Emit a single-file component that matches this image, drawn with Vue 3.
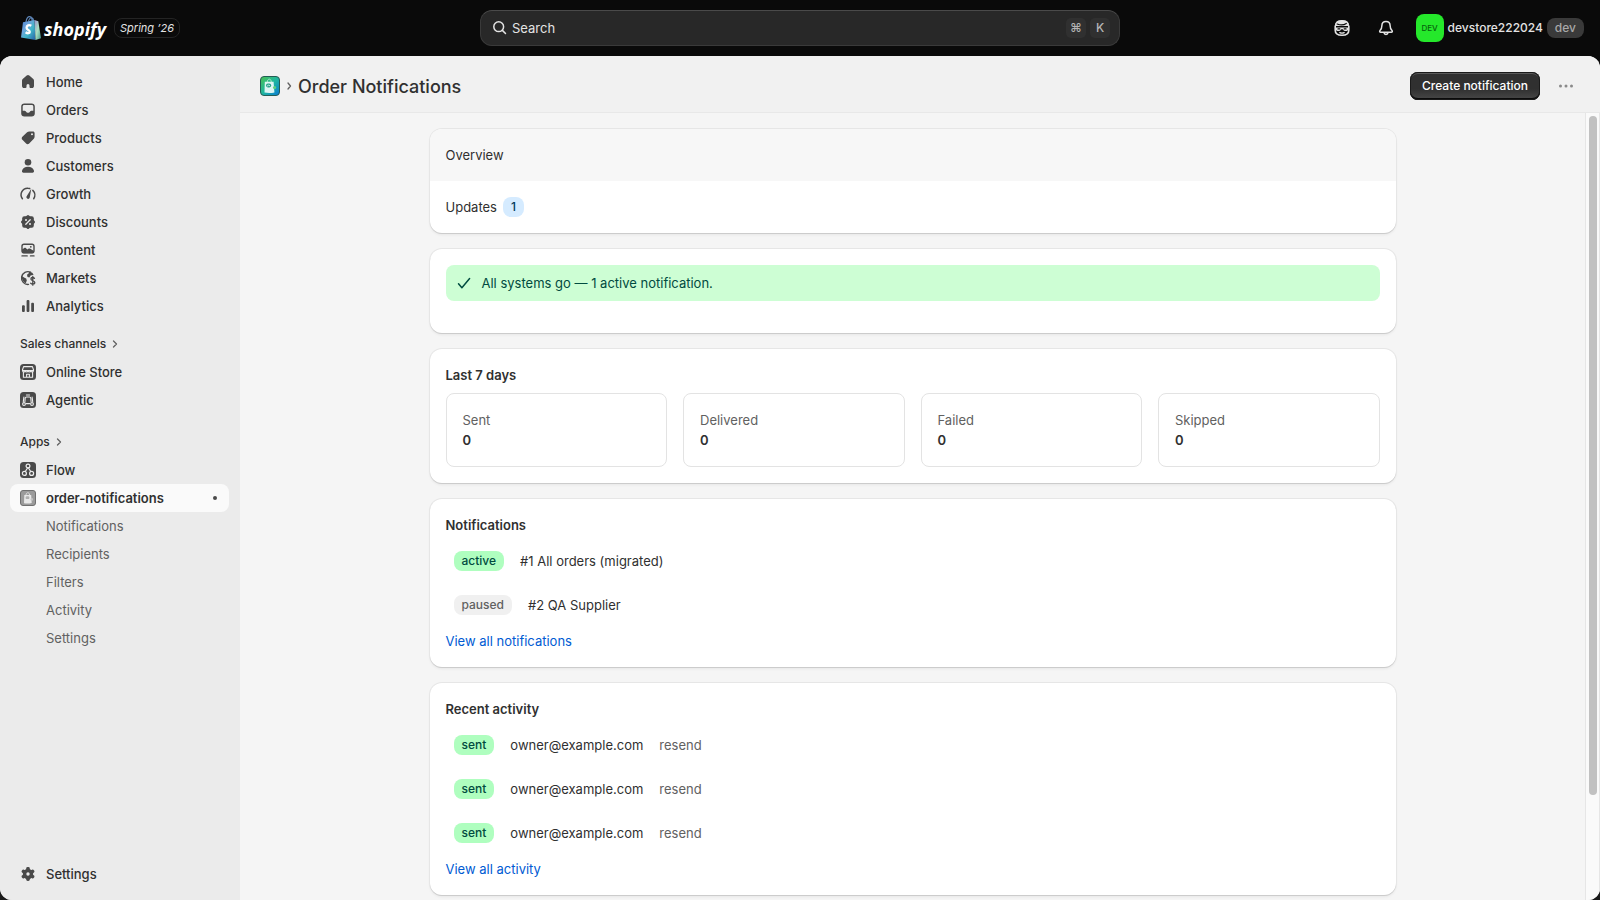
<script setup>
const icons = {
  home: '<path d="M8.7 3.6a2 2 0 0 1 2.6 0l4 3.5c.5.4.7 1 .7 1.6v5.2c0 1.2-.9 2.1-2 2.1h-1.600c-.5 0-.9-.4-.9-.9v-1.700a1.500 1.500 0 0 0-3 0v1.700c0 .5-.4.9-.9.9H6c-1.100 0-2-.9-2-2.100V8.700c0-.6.2-1.200.7-1.600z" fill="currentColor"/>',
  orders: '<path fill-rule="evenodd" d="M6.300 3.500h7.400c1.800 0 3.100 1.200 3.100 3v7c0 1.800-1.300 3-3.100 3H6.300c-1.800 0-3.100-1.200-3.100-3v-7c0-1.800 1.300-3 3.100-3zM6.300 5c-1 0-1.600.6-1.600 1.500v4.300h2c.6 0 .9.2 1.200.7l.4.600c.3.500.7.700 1.200.7h1c.5 0 .9-.2 1.200-.7l.4-.6c.3-.5.6-.7 1.200-.7h2V6.500c0-.9-.6-1.500-1.600-1.500z" fill="currentColor"/>',
  products: '<path fill-rule="evenodd" d="M11.300 3.500h3.600c1 0 1.700.7 1.700 1.700v3.600c0 .8-.3 1.500-.8 2l-4.600 4.700c-.9.900-2.300.9-3.100 0l-3.700-3.700c-.9-.8-.9-2.200 0-3.100l4.700-4.500c.6-.5 1.400-.7 2.200-.7zM14 7.200a1 1 0 1 0 0-2 1 1 0 0 0 0 2z" fill="currentColor"/>',
  customers: '<circle cx="10" cy="6.200" r="3.300" fill="currentColor"/><path d="M10 10.800c3 0 5.300 1.600 6 4 .3 1-.4 1.900-1.400 1.900H5.400c-1 0-1.700-.9-1.400-1.900.7-2.400 3-4 6-4z" fill="currentColor"/>',
  growth: '<path d="M4.400 14.700A6.500 6.500 0 0 1 10 4.300q1 0 1.700.2M14.800 6.400a6.400 6.400 0 0 1 .9 8.300" fill="none" stroke="currentColor" stroke-width="1.500" stroke-linecap="round"/><path d="M13.300 4.800 11.700 13.800a1.700 1.700 0 1 1-3.200-1.200z" fill="currentColor"/>',
  discounts: '<rect x="4.200" y="4.200" width="11.600" height="11.600" rx="2" fill="currentColor"/><rect x="4.600" y="4.600" width="10.800" height="10.800" rx="1.500" transform="rotate(45 10 10)" fill="currentColor"/><path d="M12.200 7.800l-4.400 4.400" stroke="#ebebeb" stroke-width="1.300" stroke-linecap="round"/><circle cx="8" cy="8" r="1" fill="#ebebeb"/><circle cx="12" cy="12" r="1" fill="#ebebeb"/>',
  content: '<rect x="4" y="4.200" width="12" height="8.600" rx="2" fill="none" stroke="currentColor" stroke-width="1.400"/><path d="M4 9.500 6.300 8c.6-.4 1.200-.3 1.700.2l1.400 1.400 1-.8c.6-.5 1.300-.5 1.900 0L16 11v1c0 .8-.6 1.300-1.400 1.300H5.400C4.600 13.300 4 12.800 4 12z" fill="currentColor"/><circle cx="12.800" cy="6.800" r=".9" fill="currentColor"/><path d="M4 15.900h5.200M12.500 15.900H16" stroke="currentColor" stroke-width="1.400" stroke-linecap="round"/>',
  markets: '<path d="M12.600 4.200A6.400 6.400 0 1 0 10.500 16.400" fill="none" stroke="currentColor" stroke-width="1.400" stroke-linecap="round"/><path d="M3.800 8 6.500 9.800l1.700.7.600 2-1 2.800c-2.500-1-4.300-3.700-4-7.300zM9.500 9 9 6.800l1.800-1.500.3-1.600 3.200 1.100 1.300 2-3 .7-1.200 2z" fill="currentColor"/><path d="M16.500 10.300c-.5-.6-1.200-.8-1.800-.8-1.100 0-1.800.6-1.800 1.500 0 2.200 3.900 1.300 3.900 3.600 0 1-.8 1.600-2 1.600-.9 0-1.700-.4-2.200-1M14.800 8.500v8.700" fill="none" stroke="currentColor" stroke-width="1.300" stroke-linecap="round"/>',
  analytics: '<rect x="4" y="9.300" width="2.800" height="6.700" rx="1" fill="currentColor"/><rect x="8.600" y="4" width="2.800" height="12" rx="1" fill="currentColor"/><rect x="13.200" y="6.700" width="2.800" height="9.300" rx="1" fill="currentColor"/>',
  store: '<rect x="2" y="2" width="16" height="16" rx="3.500" fill="currentColor"/><g fill="none" stroke="#ebebeb" stroke-width="1.100" stroke-linejoin="round"><path d="M5.600 4.600h8.800l1.100 3.200v.8H4.500v-.8zM5.400 10v5.300h9.200V10M8.600 15.300v-3h2.800v3"/><path d="M4.600 8.600c0 1.800 2.600 1.800 2.700 0 0 1.800 2.700 1.800 2.700 0 0 1.800 2.700 1.800 2.700 0 0 1.800 2.700 1.800 2.700 0"/></g>',
  agentic: '<rect x="2" y="2" width="16" height="16" rx="3.500" fill="currentColor"/><g fill="none" stroke="#ebebeb" stroke-width="1.100" stroke-linecap="round" stroke-linejoin="round"><path d="M6.900 11.600 7.200 8.200c.1-.8.600-1.200 1.300-1.200h3c.7 0 1.200.4 1.300 1.200l.3 3.400M8.300 13.600h3.400M8.400 5h3.200M5.900 7 5.300 11.600M14.100 7l.6 4.600"/><circle cx="6" cy="14" r="1.400"/><circle cx="14" cy="14" r="1.400"/></g>',
  flow: '<rect x="2" y="2" width="16" height="16" rx="3.500" fill="currentColor"/><g fill="none" stroke="#ebebeb" stroke-width="1.200" stroke-linecap="round"><circle cx="10" cy="6" r="1.900"/><circle cx="6.400" cy="13.400" r="2"/><circle cx="13.600" cy="13.400" r="2"/><path d="M9.500 8 7.300 11.500M10.500 8l2.200 3.500"/></g>',
  app: '<rect x="2.500" y="2.500" width="15" height="15" rx="2.500" fill="#9b9b9b" stroke="#707070"/><path d="M6.300 7h6.900l.5 8c-2.300.7-5.500.6-7.700.2z" fill="#e8e8e8"/><path d="M8 7c0-3 3.600-3 3.600 0" fill="none" stroke="#dcdcdc" stroke-width="1"/><rect x="7.600" y="8.300" width="3.800" height="2.800" rx="1.200" fill="#b0b0b0"/><circle cx="13.800" cy="11.400" r="1.300" fill="#c4c4c4"/>',
  settings: '<g fill="currentColor"><circle cx="10" cy="10" r="5.200"/><rect x="8.200" y="3" width="3.600" height="14" rx="1.400"/><rect x="8.200" y="3" width="3.600" height="14" rx="1.400" transform="rotate(60 10 10)"/><rect x="8.200" y="3" width="3.600" height="14" rx="1.400" transform="rotate(120 10 10)"/></g><circle cx="10" cy="10" r="1.700" fill="#ebebeb"/>',
}

const mainNav = [
  ['home', 'Home'],
  ['orders', 'Orders'],
  ['products', 'Products'],
  ['customers', 'Customers'],
  ['growth', 'Growth'],
  ['discounts', 'Discounts'],
  ['content', 'Content'],
  ['markets', 'Markets'],
  ['analytics', 'Analytics'],
]
const channels = [
  ['store', 'Online Store'],
  ['agentic', 'Agentic'],
]
const appPages = ['Notifications', 'Recipients', 'Filters', 'Activity', 'Settings']
const stats = [
  ['Sent', 0],
  ['Delivered', 0],
  ['Failed', 0],
  ['Skipped', 0],
]
const notifications = [
  { status: 'active', name: '#1 All orders (migrated)' },
  { status: 'paused', name: '#2 QA Supplier' },
]
const activity = [1, 2, 3].map((id) => ({ id, status: 'sent', to: 'owner@example.com', kind: 'resend' }))
</script>

<template>
  <div class="admin">
    <header class="topbar">
      <div class="brand">
        <a class="logo" href="#" aria-label="Shopify home">
          <svg width="22" height="26" viewBox="0 0 22 26" aria-hidden="true">
            <defs>
              <linearGradient id="bag" x1="0" y1="0" x2="1" y2="1">
                <stop offset="0" stop-color="#4b7fd0" />
                <stop offset=".35" stop-color="#6ea6dc" />
                <stop offset=".6" stop-color="#3fb6c8" />
                <stop offset="1" stop-color="#2b5fa8" />
              </linearGradient>
              <linearGradient id="side" x1="0" y1="0" x2="1" y2="1">
                <stop offset="0" stop-color="#9a8fd0" />
                <stop offset=".5" stop-color="#a8e0c0" />
                <stop offset="1" stop-color="#3d8f8c" />
              </linearGradient>
            </defs>
            <path d="M6 7c.5-3.500 2.200-5.500 4-5.300 1.300.1 2 1.500 2.200 4.300M8.500 6.500C9 4 10.500 2.500 12 2.800c1 .3 1.500 1.500 1.600 3" fill="none" stroke="#5e86b8" stroke-width="1.200" />
            <path d="M3 7.300 14.500 5l1 20L1 22.500z" fill="url(#bag)" />
            <path d="M14.500 5l3.800 1.300 2.700 17-5.500 1.700z" fill="url(#side)" />
            <path d="M11.300 10.800c-2.300-1.300-4.700-.3-4.700 1.900 0 2.400 3.300 2.300 3.200 4.300-.1 1.600-2.300 1.600-4.200.2" fill="none" stroke="#fff" stroke-width="2.300" />
          </svg>
          <span class="wordmark">shopify</span>
        </a>
        <a class="edition" href="#">Spring ’26</a>
      </div>

      <label class="search">
        <svg width="16" height="16" viewBox="0 0 16 16" aria-hidden="true">
          <circle cx="6.700" cy="6.700" r="4.900" fill="none" stroke="#e3e3e3" stroke-width="1.500" />
          <path d="M10.400 10.400l3.100 3.100" stroke="#e3e3e3" stroke-width="1.500" stroke-linecap="round" />
        </svg>
        <input type="text" placeholder="Search" aria-label="Search" />
        <kbd>⌘</kbd>
        <kbd>K</kbd>
      </label>

      <div class="tools">
        <button class="tool" type="button" aria-label="Sidekick">
          <svg width="20" height="20" viewBox="0 0 20 20" aria-hidden="true">
            <path d="M3.600 8C3.200 4.500 5.500 2.800 10 2.800s6.800 1.700 6.400 5.200" fill="#e3e3e3" stroke="#e3e3e3" stroke-width="1.400" />
            <path d="M3.200 7.500v4.800c0 3.400 2.600 5 6.800 5s6.800-1.600 6.800-5V7.500" fill="none" stroke="#e3e3e3" stroke-width="1.600" />
            <path d="M5.200 6c3 1.200 7 .9 9.100-.5" fill="none" stroke="#0a0a0a" stroke-width="1.200" stroke-linecap="round" />
            <path d="M4.200 8.600c3.600.6 8 .6 11.600 0" fill="none" stroke="#0a0a0a" stroke-width=".8" />
            <path d="M3.600 9.400h12.800v2c-1 2.200-4.800 2.200-5.700-.2H9.300c-.9 2.400-4.700 2.400-5.700.2z" fill="#e3e3e3" />
            <path d="M6 10.900h1.800M12.200 10.900H14" stroke="#0a0a0a" stroke-width="1.300" stroke-linecap="round" />
            <path d="M7.800 14.600q2.200.9 4.400 0" fill="none" stroke="#e3e3e3" stroke-width="1.300" stroke-linecap="round" />
          </svg>
        </button>
        <button class="tool" type="button" aria-label="Alerts">
          <svg width="20" height="20" viewBox="0 0 20 20" aria-hidden="true">
            <path d="M10 3.400c-2.500 0-4.100 1.800-4.100 4.200 0 2.700-.6 3.700-1.900 4.900-.7.700-.3 1.700.7 1.700h10.600c1 0 1.400-1 .7-1.700-1.300-1.200-1.900-2.200-1.900-4.900 0-2.400-1.600-4.200-4.100-4.200z" fill="none" stroke="#e3e3e3" stroke-width="1.500" stroke-linejoin="round" />
            <path d="M8 14.600c.2 2.400 3.800 2.400 4 0" fill="none" stroke="#e3e3e3" stroke-width="1.500" />
          </svg>
        </button>
        <button class="account" type="button">
          <span class="avatar">DEV</span>
          <span>devstore222024</span>
          <span class="plan">dev</span>
        </button>
      </div>
    </header>

    <div class="frame">
      <nav class="sidebar" aria-label="Main">
        <a v-for="[icon, label] in mainNav" :key="label" class="item" href="#">
          <svg width="20" height="20" viewBox="0 0 20 20" aria-hidden="true" v-html="icons[icon]"></svg>
          {{ label }}
        </a>
        <button class="section first" type="button">
          Sales channels
          <svg width="6" height="8" viewBox="0 0 6 8" aria-hidden="true"><path d="M1.500 1l3 3-3 3" /></svg>
        </button>
        <a v-for="[icon, label] in channels" :key="label" class="item" href="#">
          <svg width="20" height="20" viewBox="0 0 20 20" aria-hidden="true" v-html="icons[icon]"></svg>
          {{ label }}
        </a>
        <button class="section" type="button">
          Apps
          <svg width="6" height="8" viewBox="0 0 6 8" aria-hidden="true"><path d="M1.500 1l3 3-3 3" /></svg>
        </button>
        <a class="item" href="#">
          <svg width="20" height="20" viewBox="0 0 20 20" aria-hidden="true" v-html="icons.flow"></svg>
          Flow
        </a>
        <a class="item current" href="#" aria-current="page">
          <svg width="20" height="20" viewBox="0 0 20 20" aria-hidden="true" v-html="icons.app"></svg>
          order-notifications
          <i class="dot"></i>
        </a>
        <a v-for="page in appPages" :key="page" class="item sub" href="#">{{ page }}</a>
        <a class="item last" href="#">
          <svg width="20" height="20" viewBox="0 0 20 20" aria-hidden="true" v-html="icons.settings"></svg>
          Settings
        </a>
      </nav>

      <main class="main">
        <div class="page-head">
          <svg width="20" height="20" viewBox="0 0 20 20" aria-hidden="true">
            <defs>
              <linearGradient id="tile" x1="0" y1="0" x2="1" y2="1">
                <stop offset="0" stop-color="#4bc04f" />
                <stop offset=".5" stop-color="#1fb6a0" />
                <stop offset="1" stop-color="#0878d8" />
              </linearGradient>
            </defs>
            <rect x=".5" y=".5" width="19" height="19" rx="3.500" fill="url(#tile)" stroke="#245c55" />
            <path d="M7.300 6c0-3.800 4-3.800 4 0" fill="none" stroke="#a9e8c4" stroke-width="1" />
            <path d="M4.800 5.800h8.800l.8 10.600c-3 .9-6.900.8-9.900.2z" fill="#dff5f4" />
            <rect x="6" y="7.600" width="5.200" height="3.800" rx="1.800" fill="#2fa58d" />
            <path d="M7 10.200l1.500-1 1.500.5" stroke="#dff5f4" fill="none" stroke-width=".8" />
            <circle cx="14.600" cy="11.500" r="1.600" fill="#5fd07f" />
          </svg>
          <svg class="crumb" width="6" height="10" viewBox="0 0 6 10" aria-hidden="true"><path d="M2 2l2.500 3L2 8" /></svg>
          <h1>Order Notifications</h1>
          <button class="primary" type="button">Create notification</button>
          <button class="more" type="button" aria-label="More actions">
            <svg width="20" height="20" viewBox="0 0 20 20" fill="#8a8a8a" aria-hidden="true">
              <circle cx="4.500" cy="10" r="1.500" /><circle cx="10" cy="10" r="1.500" /><circle cx="15.500" cy="10" r="1.500" />
            </svg>
          </button>
        </div>

        <div class="body">
          <div class="scroller">
            <div class="stack">
              <nav class="card tabs" aria-label="App pages">
                <a class="tab on" href="#">Overview</a>
                <a class="tab" href="#">Updates <span class="badge info">1</span></a>
              </nav>

              <section class="card status">
                <div class="banner" role="status">
                  <svg width="20" height="20" viewBox="0 0 20 20" aria-hidden="true">
                    <path d="M4.500 10.700l3.400 4L15.600 5.600" fill="none" stroke="#014b40" stroke-width="1.500" stroke-linecap="round" stroke-linejoin="round" />
                  </svg>
                  All systems go — 1 active notification.
                </div>
              </section>

              <section class="card">
                <h2>Last 7 days</h2>
                <dl class="stats">
                  <div v-for="[label, value] in stats" :key="label" class="stat">
                    <dt>{{ label }}</dt>
                    <dd>{{ value }}</dd>
                  </div>
                </dl>
              </section>

              <section class="card">
                <h2>Notifications</h2>
                <div v-for="n in notifications" :key="n.name" class="row">
                  <span class="badge" :class="n.status">{{ n.status }}</span>
                  <span>{{ n.name }}</span>
                </div>
                <a class="link" href="#">View all notifications</a>
              </section>

              <section class="card">
                <h2>Recent activity</h2>
                <div v-for="a in activity" :key="a.id" class="row">
                  <span class="badge active">{{ a.status }}</span>
                  <span>{{ a.to }}</span>
                  <span class="muted">{{ a.kind }}</span>
                </div>
                <a class="link" href="#">View all activity</a>
              </section>
            </div>
          </div>
          <div class="track" aria-hidden="true"><div class="thumb"></div></div>
        </div>
      </main>
    </div>
  </div>
</template>

<style>
body {
  background: #1a1a1a;
}
</style>

<style scoped>
.admin {
  display: flex;
  flex-direction: column;
  height: 100vh;
  font: 400 13px/20px Inter, sans-serif;
  color: #303030;
  background: linear-gradient(#0a0a0a 50%, #1a1a1a 50%);
}
a {
  color: inherit;
  text-decoration: none;
}
button,
input {
  font: inherit;
  color: inherit;
  border: 0;
  padding: 0;
  background: none;
}
h1,
h2,
dl,
dt,
dd {
  margin: 0;
}
svg {
  flex: none;
}

.topbar {
  display: grid;
  grid-template-columns: 1fr minmax(0, 640px) 1fr;
  align-items: center;
  height: 56px;
  flex: none;
  color: #e3e3e3;
}
.brand {
  display: flex;
  align-items: center;
  gap: 8px;
  padding-left: 20px;
}
.logo {
  display: flex;
  align-items: center;
  gap: 2px;
}
.wordmark {
  padding-top: 2px;
  font: italic 700 18px/24px "Open Sans", sans-serif;
  color: #fff;
}
.edition {
  box-sizing: border-box;
  height: 20px;
  padding: 0 5px;
  border: 1px solid #242424;
  border-radius: 8px;
  font-size: 11px;
  line-height: 18px;
  font-style: italic;
}
.search {
  box-sizing: border-box;
  display: flex;
  align-items: center;
  height: 36px;
  padding: 0 9px 0 11px;
  gap: 4px;
  border: 1px solid #3a3a3a;
  border-top-color: #4a4a4a;
  border-radius: 12px;
  background: #282828;
}
.search input {
  flex: 1;
  min-width: 0;
  outline: 0;
}
.search input::placeholder {
  color: #e3e3e3;
  opacity: 1;
}
kbd {
  width: 20px;
  height: 20px;
  border-radius: 5px;
  background: #303030;
  color: #b5b5b5;
  font: 500 12px/20px Inter, sans-serif;
  text-align: center;
}
.tools {
  display: flex;
  align-items: center;
  justify-content: flex-end;
  gap: 8px;
  padding-right: 16px;
}
.tool {
  display: grid;
  place-items: center;
  width: 36px;
  height: 36px;
}
.account {
  display: flex;
  align-items: center;
  gap: 4px;
  margin-left: 4px;
  font-size: 12px;
  font-weight: 500;
}
.avatar {
  width: 28px;
  height: 28px;
  border-radius: 8px;
  background: #25e82b;
  color: #07630b;
  font-size: 8px;
  line-height: 28px;
}
.plan {
  padding: 0 8px;
  border-radius: 8px;
  background: #3a3a3a;
  color: #a8a8a8;
}

.frame {
  display: flex;
  flex: 1;
  min-height: 0;
  border-radius: 12px;
  overflow: hidden;
  background: #f5f5f5;
}
.sidebar {
  box-sizing: border-box;
  display: flex;
  flex-direction: column;
  flex: none;
  width: 240px;
  padding: 12px 11px 12px 10px;
  background: #ebebeb;
}
.item {
  display: flex;
  align-items: center;
  gap: 8px;
  height: 28px;
  padding: 0 8px;
  border-radius: 8px;
  font-weight: 500;
}
.item svg {
  color: #4a4a4a;
}
.current {
  background: #fafafa;
  font-weight: 600;
}
.sub {
  padding-left: 36px;
  font-weight: 400;
  color: #616161;
}
.last {
  margin-top: auto;
}
.dot {
  width: 4px;
  height: 4px;
  margin: 0 4px 0 auto;
  border-radius: 50%;
  background: #4a4a4a;
}
.section {
  display: flex;
  align-items: center;
  gap: 6px;
  height: 28px;
  margin-top: 14px;
  padding: 0 10px;
  font-size: 12px;
  font-weight: 500;
}
.section.first {
  margin-top: 10px;
}
.section svg,
.crumb {
  fill: none;
  stroke: #616161;
  stroke-width: 1.300;
  stroke-linecap: round;
  stroke-linejoin: round;
}

.main {
  display: flex;
  flex-direction: column;
  flex: 1;
  min-width: 0;
}
.page-head {
  display: flex;
  align-items: center;
  box-sizing: border-box;
  flex: none;
  height: 57px;
  padding: 4px 20px 0;
  background: #f1f1f1;
  border-bottom: 1px solid #e8e8e8;
}
.crumb {
  margin: 0 6px;
}
h1 {
  flex: 1;
  padding-top: 2px;
  font-size: 18px;
  line-height: 24px;
  font-weight: 550;
}
.primary {
  height: 28px;
  padding: 0 12px;
  border-radius: 8px;
  background: linear-gradient(#303030 60%, #484848);
  box-shadow: inset 0 0 0 1px #1a1a1a, inset 0 2px 0 #5a5a5a, inset 0 -2px 0 #0a0a0a;
  color: #fff;
  font-size: 12px;
  font-weight: 550;
}
.more {
  display: grid;
  place-items: center;
  width: 28px;
  height: 28px;
  margin-left: 12px;
}
.body {
  display: flex;
  flex: 1;
  min-height: 0;
}
.scroller {
  flex: 1;
  min-width: 0;
  overflow-y: auto;
  scrollbar-width: none;
}
.stack {
  display: flex;
  flex-direction: column;
  gap: 16px;
  max-width: 966px;
  margin: 0 auto;
  padding: 16px 16px 64px;
}
.track {
  box-sizing: border-box;
  width: 15px;
  padding: 3px;
  border: solid #e6e6e6;
  border-width: 0 1px;
  background: #fafafa;
}
.thumb {
  width: 8px;
  height: 87%;
  border-radius: 4px;
  background: #c1c1c1;
}

.card {
  display: flex;
  flex-direction: column;
  gap: 8px;
  padding: 16px;
  border-radius: 12px;
  background: #fff;
  box-shadow: 0 1px 0 #cccccc, 0 0 0 1px #e6e6e6, 0 2px 3px rgba(0, 0, 0, 0.06);
}
.tabs {
  gap: 0;
  padding: 0;
  overflow: hidden;
}
.tab {
  display: flex;
  align-items: center;
  gap: 6px;
  padding: 16px;
}
.tab.on {
  background: #f7f7f7;
}
.status {
  padding-bottom: 32px;
}
.banner {
  display: flex;
  align-items: center;
  gap: 8px;
  padding: 8px;
  border-radius: 8px;
  background: #cdfed4;
  color: #014b40;
}
h2 {
  font-size: 13px;
  line-height: 20px;
  font-weight: 600;
}
.stats {
  display: grid;
  grid-template-columns: repeat(4, 1fr);
  gap: 16px;
}
.stat {
  padding: 16px;
  border: 1px solid #e3e3e3;
  border-radius: 8px;
}
dt,
.muted {
  color: #616161;
}
dd {
  font-weight: 600;
}
.row {
  display: flex;
  align-items: center;
  gap: 16px;
  padding: 8px;
}
.badge {
  padding: 0 8px;
  border-radius: 8px;
  font-size: 12px;
  font-weight: 550;
}
.active {
  background: #affebf;
  color: #014b40;
}
.paused {
  background: #f0f0f0;
  color: #616161;
}
.info {
  background: #d5ebff;
  color: #003a5a;
}
.link {
  align-self: flex-start;
  color: #005bd3;
}
</style>
